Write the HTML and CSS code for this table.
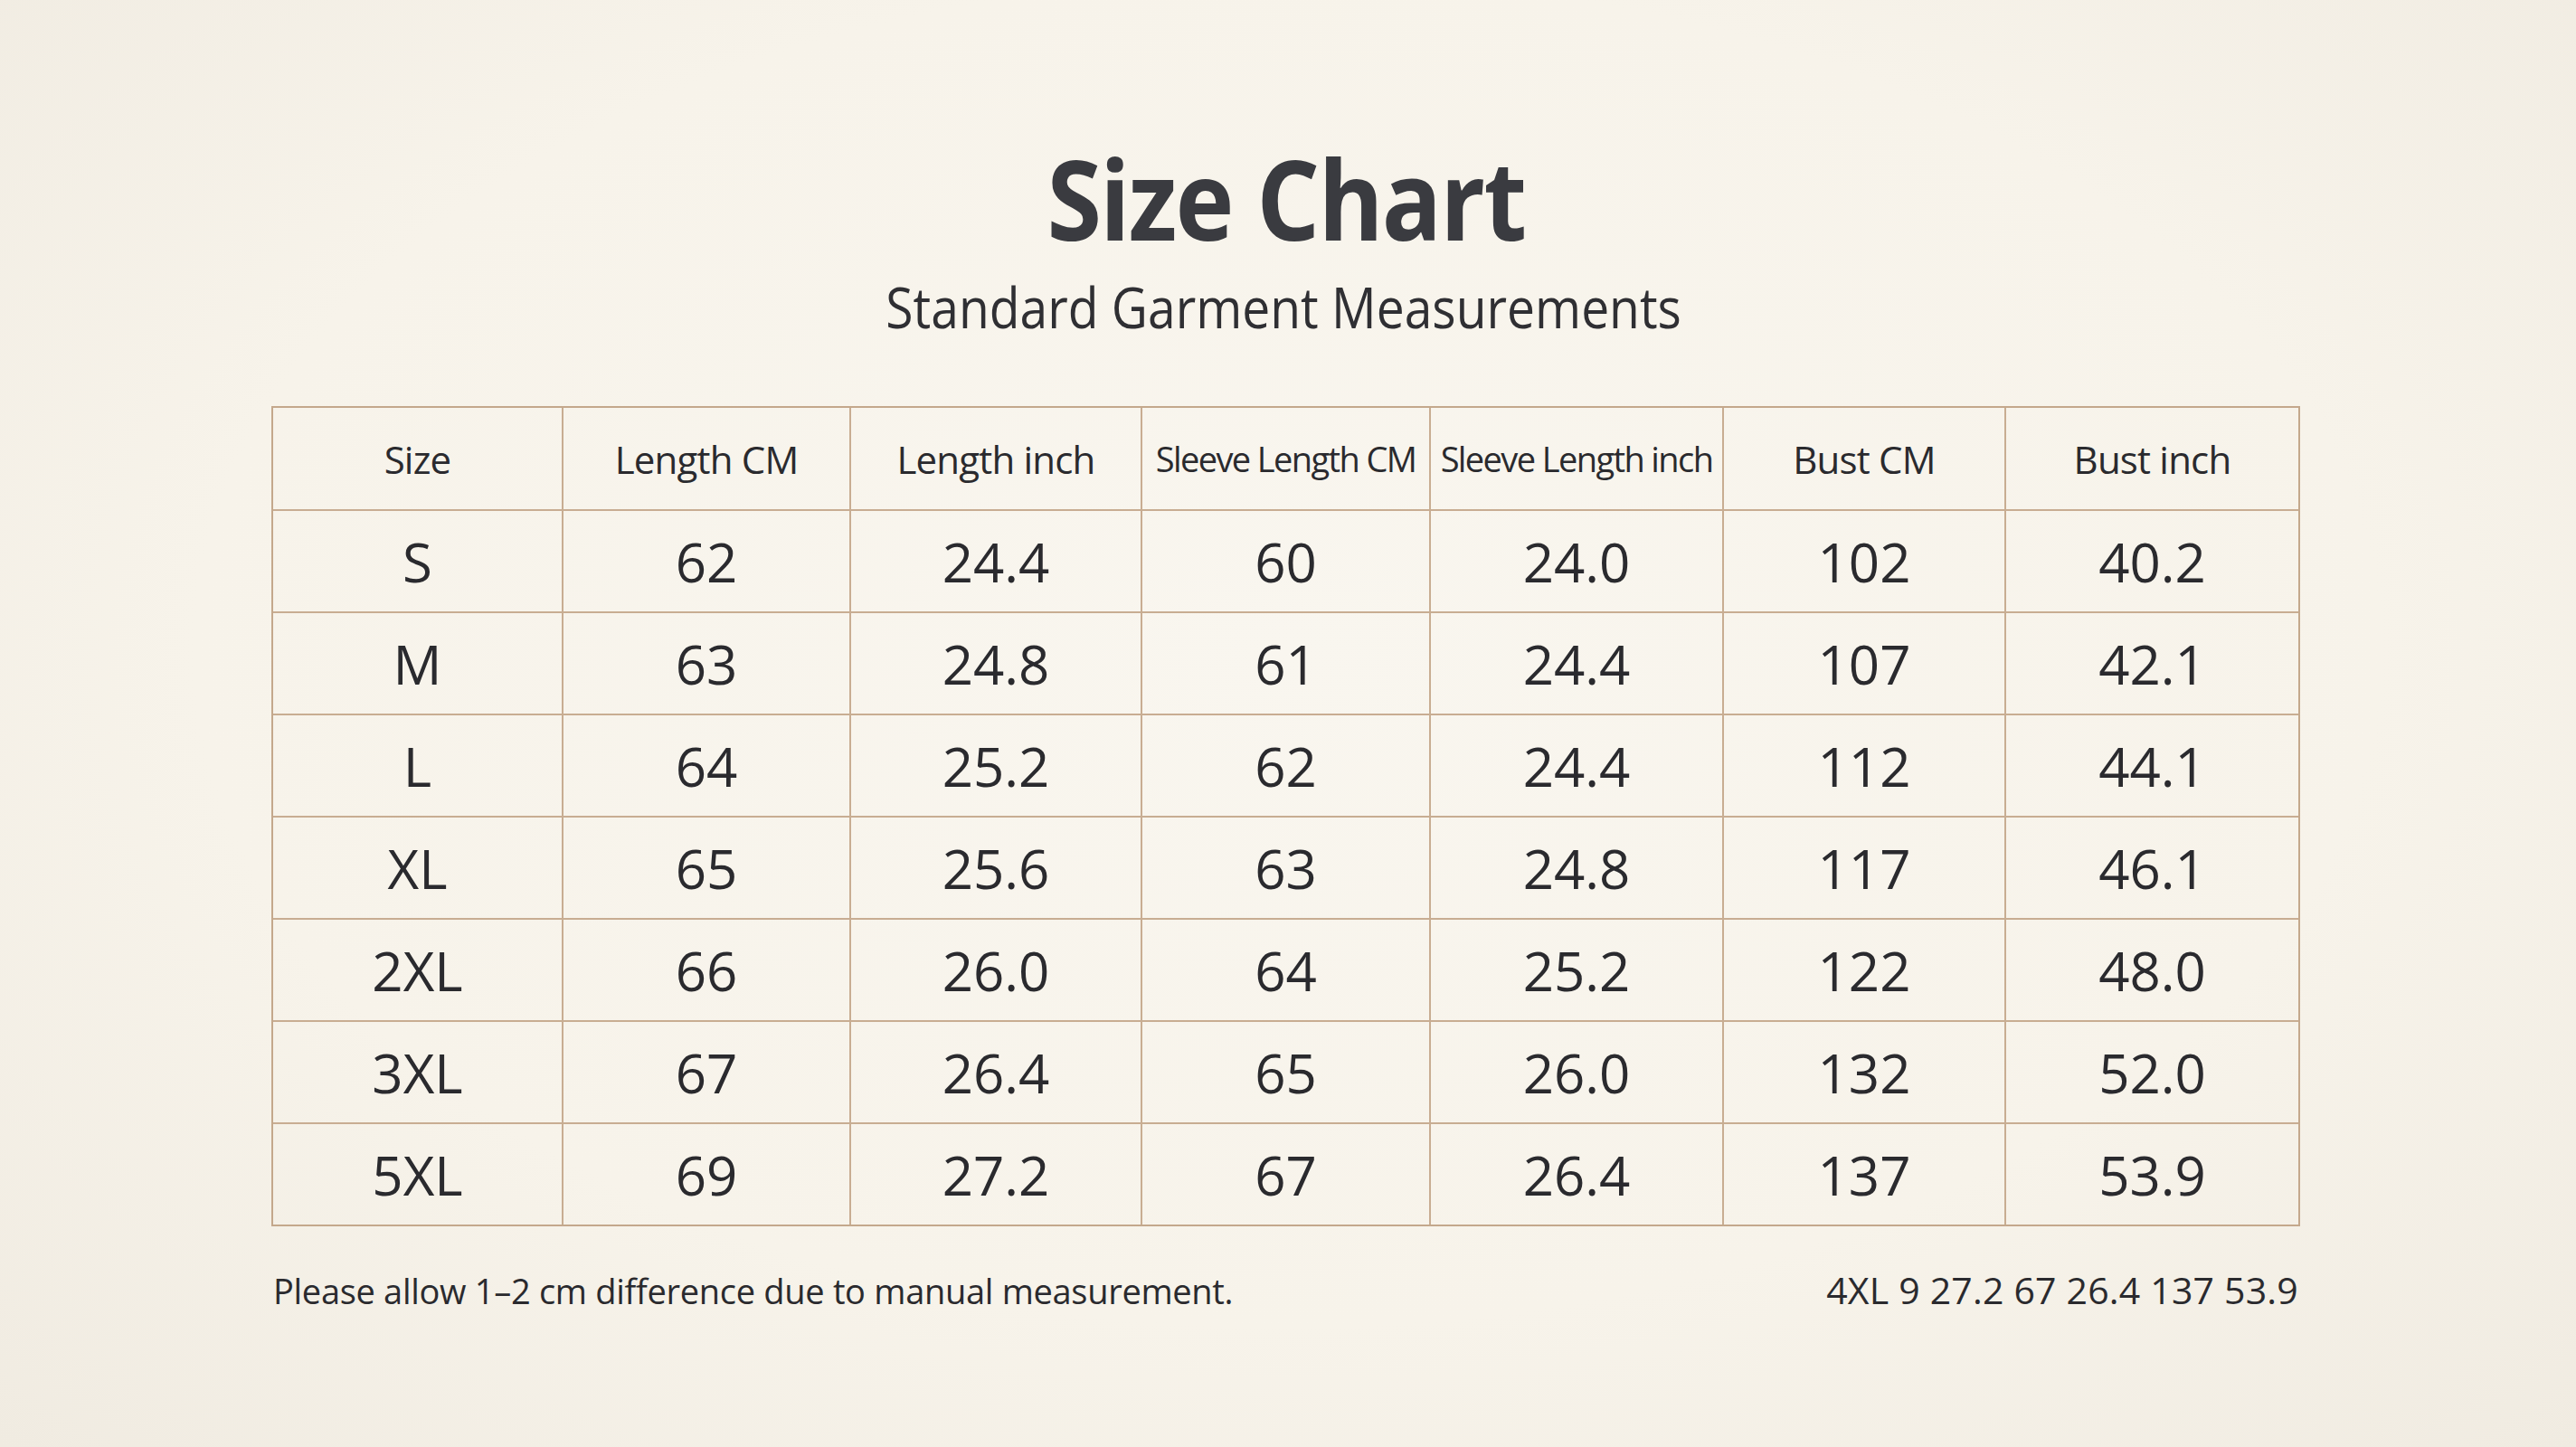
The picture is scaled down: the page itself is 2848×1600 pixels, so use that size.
FILE: index.html
```html
<!DOCTYPE html>
<html lang="en">
<head>
<meta charset="utf-8">
<title>Size Chart</title>
<link rel="stylesheet" href="styles.css">
</head>
<body>
<main class="page">
  <h1 class="title">Size Chart</h1>
  <p class="subtitle">Standard Garment Measurements</p>
  <div class="chart">
    <div class="row head">
      <div class="cell">Size</div>
      <div class="cell">Length CM</div>
      <div class="cell">Length inch</div>
      <div class="cell tight">Sleeve Length CM</div>
      <div class="cell tight">Sleeve Length inch</div>
      <div class="cell">Bust CM</div>
      <div class="cell">Bust inch</div>
    </div>
    <div class="row"><div class="cell">S</div><div class="cell">62</div><div class="cell">24.4</div><div class="cell">60</div><div class="cell">24.0</div><div class="cell">102</div><div class="cell">40.2</div></div>
    <div class="row"><div class="cell">M</div><div class="cell">63</div><div class="cell">24.8</div><div class="cell">61</div><div class="cell">24.4</div><div class="cell">107</div><div class="cell">42.1</div></div>
    <div class="row"><div class="cell">L</div><div class="cell">64</div><div class="cell">25.2</div><div class="cell">62</div><div class="cell">24.4</div><div class="cell">112</div><div class="cell">44.1</div></div>
    <div class="row"><div class="cell">XL</div><div class="cell">65</div><div class="cell">25.6</div><div class="cell">63</div><div class="cell">24.8</div><div class="cell">117</div><div class="cell">46.1</div></div>
    <div class="row"><div class="cell">2XL</div><div class="cell">66</div><div class="cell">26.0</div><div class="cell">64</div><div class="cell">25.2</div><div class="cell">122</div><div class="cell">48.0</div></div>
    <div class="row"><div class="cell">3XL</div><div class="cell">67</div><div class="cell">26.4</div><div class="cell">65</div><div class="cell">26.0</div><div class="cell">132</div><div class="cell">52.0</div></div>
    <div class="row"><div class="cell">5XL</div><div class="cell">69</div><div class="cell">27.2</div><div class="cell">67</div><div class="cell">26.4</div><div class="cell">137</div><div class="cell">53.9</div></div>
  </div>
  <div class="notes">
    <span class="note">Please allow 1–2 cm difference due to manual measurement.</span>
    <span class="note note-right">4XL 9 27.2 67 26.4 137 53.9</span>
  </div>
</main>
</body>
</html>
```
FILE: styles.css
```css
html, body {
  margin: 0;
  padding: 0;
}
body {
  width: 2848px;
  height: 1600px;
  overflow: hidden;
  background: radial-gradient(ellipse at 50% 45%, #f9f6ef 0%, #f7f3ea 60%, #f0ebe1 100%);
  font-family: "Open Sans", "Noto Sans", sans-serif;
  color: #333338;
}
.page {
  display: flex;
  flex-direction: column;
  align-items: center;
  padding-top: 158px;
}
.title {
  margin: 0;
  font-size: 122px;
  line-height: 1;
  font-weight: 700;
  color: #3a3b40;
  letter-spacing: -2px;
  transform: scaleX(0.9);
  margin-left: -4px;
}
.subtitle {
  margin: 28px 0 0;
  font-size: 62px;
  line-height: 1;
  font-weight: 400;
  color: #2f2f33;
  transform: scaleX(0.89);
  margin-left: -10px;
}
.chart {
  margin-top: 79px;
  width: 2239px;
  border: 2px solid #c4a88c;
  margin-left: -5px;
  display: flex;
  flex-direction: column;
}
.row {
  display: grid;
  grid-template-columns: 319px 318px 322px 319px 324px 312px 1fr;
  height: 113px;
  border-top: 2px solid #c8ad92;
  box-sizing: border-box;
}
.row:first-child {
  border-top: 0;
  height: 112px;
}
.cell {
  display: flex;
  align-items: center;
  justify-content: center;
  border-left: 2px solid #c8ad92;
  font-size: 60px;
  color: #2a2a2e;
  white-space: nowrap;
}
.cell:first-child {
  border-left: 0;
}
.head .cell {
  font-size: 42px;
  letter-spacing: -0.8px;
  color: #2a2a2e;
}
.head .cell.tight {
  font-size: 38px;
  letter-spacing: -1.6px;
}
.notes {
  width: 2239px;
  margin-left: -5px;
  margin-top: 50px;
  display: flex;
  justify-content: space-between;
  align-items: baseline;
}
.note {
  font-size: 38px;
  line-height: 1;
  color: #2a2a2e;
  letter-spacing: -0.3px;
}
.note-right {
  font-size: 41px;
  letter-spacing: 0.2px;
}
```
